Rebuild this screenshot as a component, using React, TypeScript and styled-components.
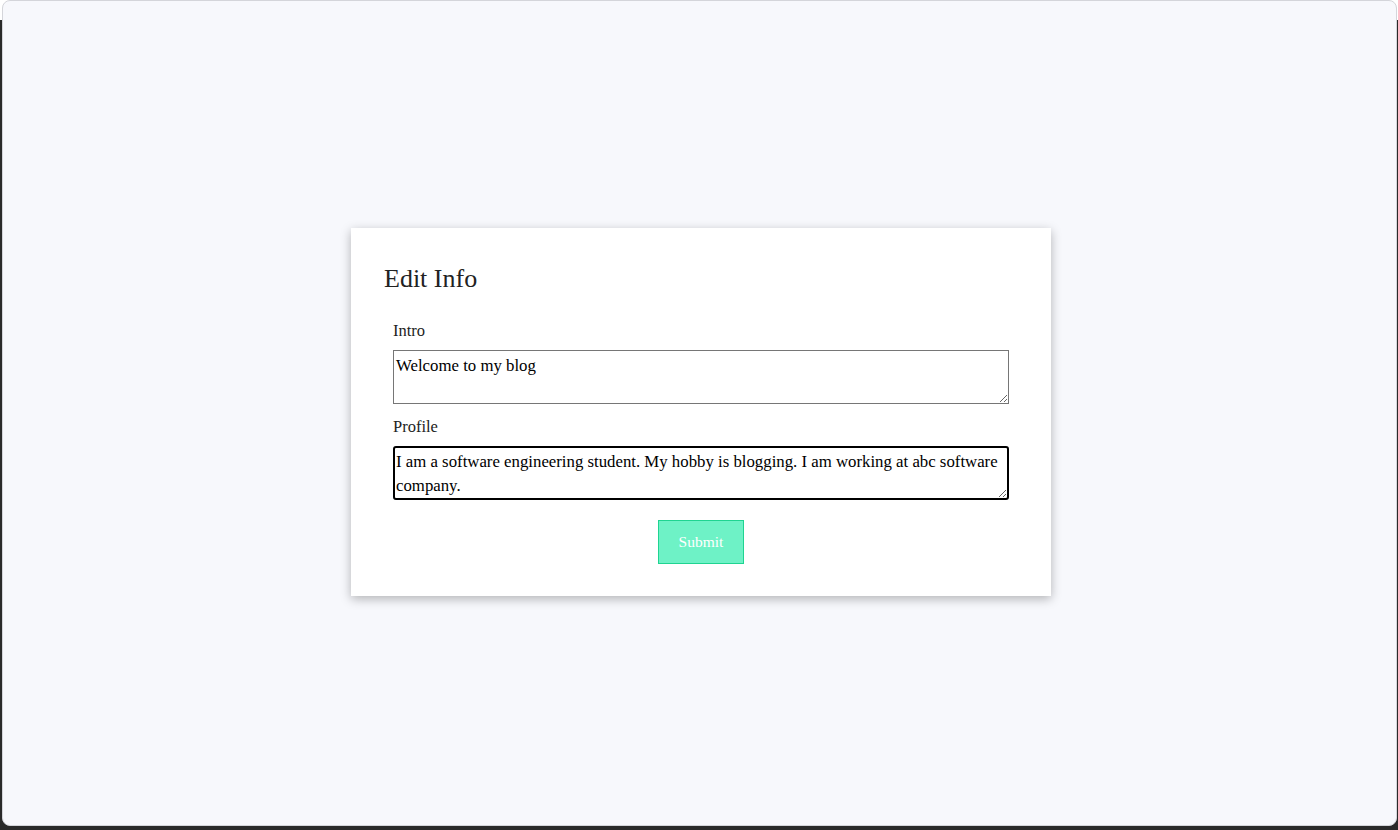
import React from "react";
import styled, { createGlobalStyle } from "styled-components";

const Global = createGlobalStyle`
  html, body { margin: 0; padding: 0; }
  body {
    background: #2a2a2a;
    font-family: "Liberation Serif", "Times New Roman", serif;
  }
`;

const Frame = styled.div`
  box-sizing: border-box;
  width: 1398px;
  height: 830px;
  padding: 0 1px 4px 2px;
  background: linear-gradient(#ffffff 0, #ffffff 20px, #2a2a2a 20px);
  display: flex;
`;

const Screen = styled.div`
  flex: 1;
  background: #f7f8fc;
  border: 1px solid #d4d5da;
  border-radius: 8px;
  display: flex;
  align-items: flex-start;
  justify-content: center;
  padding-top: 227px;
`;

const Card = styled.div`
  box-sizing: border-box;
  width: 700px;
  height: 368px;
  background: #ffffff;
  box-shadow: 0 3px 10px rgba(0, 0, 0, 0.28);
  padding: 35px 33px 0 33px;
  margin-left: 3px;
`;

const Title = styled.h2`
  margin: 0 0 27px 0;
  font-size: 26px;
  font-weight: 400;
  color: #222;
  line-height: 32px;
`;

const Form = styled.form`
  padding: 0 9px;
  display: flex;
  flex-direction: column;
`;

const Label = styled.label`
  font-size: 16.5px;
  color: #222;
  line-height: 17px;
  margin-bottom: 11px;
`;

const Area = styled.textarea<{ $focused?: boolean }>`
  box-sizing: border-box;
  width: 616px;
  height: 54px;
  margin: 0 0 ${(p) => (p.$focused ? "16px" : "14px")} 0;
  padding: ${(p) => (p.$focused ? "2px 1px" : "3px 2px 1px")};
  font-family: "Liberation Serif", "Times New Roman", serif;
  font-size: 16.8px;
  line-height: 24px;
  color: #000;
  border: ${(p) => (p.$focused ? "2px solid #000" : "1px solid #767676")};
  border-radius: ${(p) => (p.$focused ? "3px" : "0")};
  outline: none;
  resize: vertical;
  overflow: hidden;
`;

const Actions = styled.div`
  display: flex;
  justify-content: center;
  margin-top: 4px;
`;

const Button = styled.button`
  box-sizing: border-box;
  width: 86px;
  height: 44px;
  background: #6ef2c6;
  border: 1px solid #1fd491;
  color: #ffffff;
  font-family: "Liberation Serif", "Times New Roman", serif;
  font-size: 15.5px;
  cursor: pointer;
`;

export default function App() {
  return (
    <>
      <Global />
      <Frame>
        <Screen>
          <Card>
            <Title>Edit Info</Title>
            <Form onSubmit={(e) => e.preventDefault()}>
              <Label>Intro</Label>
              <Area defaultValue="Welcome to my blog" spellCheck={false} />
              <Label>Profile</Label>
              <Area
                $focused
                spellCheck={false}
                defaultValue="I am a software engineering student. My hobby is blogging. I am working at abc software company."
              />
              <Actions>
                <Button type="submit">Submit</Button>
              </Actions>
            </Form>
          </Card>
        </Screen>
      </Frame>
    </>
  );
}
